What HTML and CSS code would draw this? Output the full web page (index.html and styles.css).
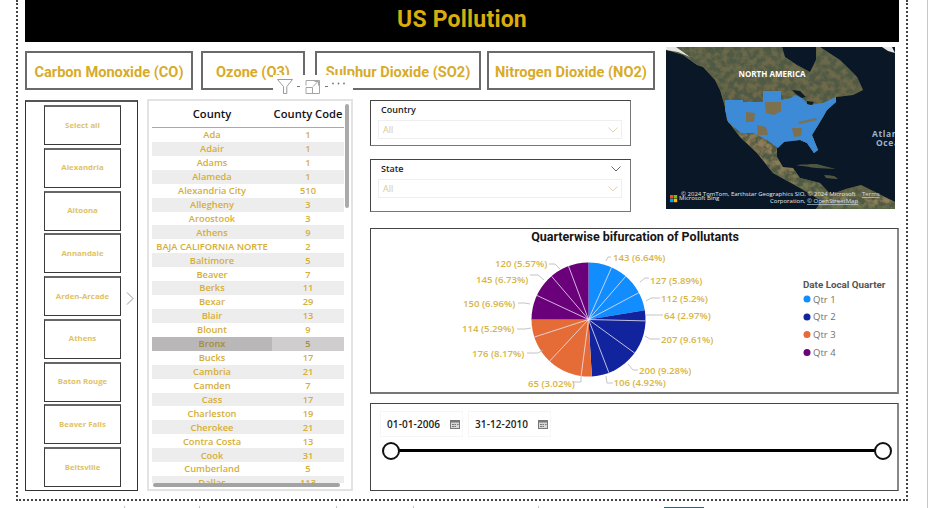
FILE: index.html
```html
<!DOCTYPE html>
<html lang="en">
<head>
<meta charset="utf-8">
<title>US Pollution</title>
<link rel="stylesheet" href="styles.css">
</head>
<body>
<div class="shell">
  <div class="frame">
    <header class="banner"><h1>US Pollution</h1></header>
    <div class="board">
      <div class="kpis">
        <div class="kpi kpi-co">Carbon Monoxide (CO)</div>
        <div class="kpi kpi-o3">Ozone (O3)</div>
        <div class="kpi kpi-so2">Sulphur Dioxide (SO2)</div>
        <div class="kpi kpi-no2">Nitrogen Dioxide (NO2)</div>
      </div>

      <div class="map">
        <svg class="map-svg" viewBox="0 0 229 162" width="229" height="162" role="img" aria-label="Map of North America">
          <defs>
            <linearGradient id="land" x1="0" y1="0" x2="0" y2="1">
              <stop offset="0" stop-color="#6a6a4c"/>
              <stop offset="0.35" stop-color="#6f6a48"/>
              <stop offset="0.65" stop-color="#94825a"/>
              <stop offset="1" stop-color="#5f6e48"/>
            </linearGradient>
            <filter id="tex" x="0" y="0" width="100%" height="100%">
              <feTurbulence type="fractalNoise" baseFrequency="0.16" numOctaves="4" seed="7" result="n"/>
              <feColorMatrix in="n" type="matrix" values="0 0 0 0 .08  0 0 0 0 .1  0 0 0 0 .06  3.200 0 0 0 -1.050" result="shade"/>
              <feComposite in="shade" in2="SourceAlpha" operator="in" result="clip"/>
              <feMerge result="m"><feMergeNode in="SourceGraphic"/><feMergeNode in="clip"/></feMerge>
              <feGaussianBlur in="m" stdDeviation="0.4"/>
            </filter>
            <filter id="soft"><feGaussianBlur stdDeviation="0.4"/></filter>
          </defs>
          <rect width="229" height="162" fill="#0a1726"/>
          <g filter="url(#tex)">
            <path fill="url(#land)" d="M0 0L.7 3L17 8L31 18L37 20L49 33L54 43L59 60L61 73L74 90L91 106L107 126L134 141L154 153L170 162H180L174 156L167 150L154 136L134 131L127 121L117 120L111 110L111 101L119 94L134 93L141 96L148 106L152 103L146 88L157 70L161 63L170 55L170 50L187 48L197 43L191 30L174 13L154 0H150L150 13L144 25L131 18L119 10L116 0Z"/>
            <path fill="url(#land)" d="M150 162L158 150L180 142L195 138L215 148L229 155V162Z"/>
            <path fill="#4d5640" d="M130 118L150 117L170 122L150 121ZM158 128L168 129L172 132L160 131Z"/>
          </g>
          <g filter="url(#soft)">
            <path fill="#e6e6e2" d="M0 0H10L24 10L12 5L0 3ZM216 0H226L229 6L222 4Z"/>
            <path fill="#3d8bd6" d="M59 53H77V55H97V44H115V53L125 51L129 48L136 51L143 58L157 56L170 50L170 55L161 63L157 70L146 88L152 103L148 106L141 96L134 93L118 95L112 101L101 93L95 90L88 86L75 86L62 75L59 63Z"/>
            <path fill="#7b6f50" d="M99 55H115V64L108 68L100 66ZM80 65L89 66L88 75L80 75ZM91 78L100 80L102 88L92 88ZM126 81H136L135 89L128 90ZM132 75L150 71L151 73L134 77Z"/>
            <path fill="#0c1a26" d="M126 43L134 44L140 50L136 51L130 47ZM141 54L148 55L146 58L141 57Z"/>
          </g>
          <text class="map-region" x="106" y="30" text-anchor="middle">NORTH AMERICA</text>
          <text class="map-ocean" x="206" y="90">Atlan</text>
          <text class="map-ocean" x="210" y="99">Ocea</text>
          <g class="ms-logo">
            <rect x="4" y="148" width="3.400" height="3.400" fill="#f25022"/>
            <rect x="7.800" y="148" width="3.400" height="3.400" fill="#7fba00"/>
            <rect x="4" y="151.800" width="3.400" height="3.400" fill="#00a4ef"/>
            <rect x="7.800" y="151.800" width="3.400" height="3.400" fill="#ffb900"/>
          </g>
          <text class="map-fine" x="13" y="153">Microsoft Bing</text>
          <text class="map-fine" x="15" y="149">© 2024 TomTom, Earthstar Geographics SIO, © 2024 Microsoft</text>
          <text class="map-fine map-link" x="196" y="149">Terms</text>
          <text class="map-fine" x="104" y="156">Corporation, <tspan class="map-link">© OpenStreetMap</tspan></text>
        </svg>
      </div>

      <aside class="slicer">
        <button class="tile">Select all</button>
        <button class="tile">Alexandria</button>
        <button class="tile">Altoona</button>
        <button class="tile">Annandale</button>
        <button class="tile">Arden-Arcade</button>
        <button class="tile">Athens</button>
        <button class="tile">Baton Rouge</button>
        <button class="tile">Beaver Falls</button>
        <button class="tile">Beltsville</button>
        <svg class="next" viewBox="0 0 8 13" width="8" height="13"><path d="M1 .5L7 6.500L1 12.500" fill="none" stroke="#8a8a8a" stroke-width=".9"/></svg>
      </aside>

      <section class="table-card">
        <div class="thead"><span>County</span><span>County Code</span></div>
        <div class="tbody">
          <div class="row"><span>Ada</span><span>1</span></div>
          <div class="row"><span>Adair</span><span>1</span></div>
          <div class="row"><span>Adams</span><span>1</span></div>
          <div class="row"><span>Alameda</span><span>1</span></div>
          <div class="row"><span>Alexandria City</span><span>510</span></div>
          <div class="row"><span>Allegheny</span><span>3</span></div>
          <div class="row"><span>Aroostook</span><span>3</span></div>
          <div class="row"><span>Athens</span><span>9</span></div>
          <div class="row"><span>BAJA CALIFORNIA NORTE</span><span>2</span></div>
          <div class="row"><span>Baltimore</span><span>5</span></div>
          <div class="row"><span>Beaver</span><span>7</span></div>
          <div class="row"><span>Berks</span><span>11</span></div>
          <div class="row"><span>Bexar</span><span>29</span></div>
          <div class="row"><span>Blair</span><span>13</span></div>
          <div class="row"><span>Blount</span><span>9</span></div>
          <div class="row row-hit"><span>Bronx</span><span>5</span></div>
          <div class="row"><span>Bucks</span><span>17</span></div>
          <div class="row"><span>Cambria</span><span>21</span></div>
          <div class="row"><span>Camden</span><span>7</span></div>
          <div class="row"><span>Cass</span><span>17</span></div>
          <div class="row"><span>Charleston</span><span>19</span></div>
          <div class="row"><span>Cherokee</span><span>21</span></div>
          <div class="row"><span>Contra Costa</span><span>13</span></div>
          <div class="row"><span>Cook</span><span>31</span></div>
          <div class="row"><span>Cumberland</span><span>5</span></div>
          <div class="row"><span>Dallas</span><span>113</span></div>
        </div>
        <div class="vbar"></div>
        <div class="hbar"></div>
      </section>

      <div class="toolbar">
        <svg viewBox="0 0 80 18" width="80" height="18">
          <path d="M4.500 2.500H19.500L13.800 9.500V16.500H10.500V9.500Z" fill="none" stroke="#9a9a9a" stroke-width="1"/>
          <path d="M24 9.500H27M52 9.500H55" stroke="#777" stroke-width="1"/>
          <path d="M33 8.500V3.500H46.500V16.500H33V10.500H39.500V16.500M40 9.500L45 4.500M41.500 4.500H45.500V8.500" fill="none" stroke="#a5a5a5" stroke-width="1"/>
          <circle cx="60" cy="6.500" r=".9" fill="#777"/>
          <circle cx="65.500" cy="6.500" r=".9" fill="#777"/>
          <circle cx="71" cy="6.500" r=".9" fill="#777"/>
        </svg>
      </div>

      <div class="filter filter-country">
        <div class="filter-head"><span>Country</span></div>
        <div class="filter-box"><span>All</span>
          <svg viewBox="0 0 10 6" width="10" height="6"><path d="M.5 .5L5 5L9.500 .5" fill="none" stroke="#e0d6b4" stroke-width="1"/></svg>
        </div>
      </div>

      <div class="filter filter-state">
        <div class="filter-head"><span>State</span>
          <svg viewBox="0 0 10 6" width="10" height="6"><path d="M.5 .5L5 5L9.500 .5" fill="none" stroke="#555" stroke-width=".9"/></svg>
        </div>
        <div class="filter-box"><span>All</span>
          <svg viewBox="0 0 10 6" width="10" height="6"><path d="M.5 .5L5 5L9.500 .5" fill="none" stroke="#e0d6b4" stroke-width="1"/></svg>
        </div>
      </div>

      <section class="chart">
        <svg viewBox="1 1 526 163" width="526" height="163" role="img" aria-label="Quarterwise bifurcation of Pollutants">
          <text class="chart-title" x="265" y="13" text-anchor="middle">Quarterwise bifurcation of Pollutants</text>
          <g transform="translate(218.500 91.500)">
            <path fill="#118dff" d="M0 0V-57A57 57 0 0 1 56.300 -9.200Z"/>
            <path fill="#12239e" d="M0 0L56.300 -9.200A57 57 0 0 1 3.400 56.900Z"/>
            <path fill="#e66c37" d="M0 0L3.400 56.900A57 57 0 0 1 -57 0Z"/>
            <path fill="#6b007b" d="M0 0H-57A57 57 0 0 1 0 -57Z"/>
            <g class="spokes">
              <path d="M0 0L23.100 -52.100M0 0L37.200 -43.200M0 0L50.300 -26.800M0 0L57 1.400M0 0L46.100 33.500M0 0L20.400 53.200M0 0L-7.400 56.500M0 0L-38.900 41.700M0 0L-54.200 17.600M0 0L-51.700 -24.100M0 0L-37 -43.300M0 0L-20 -53.400"/>
            </g>
          </g>
          <g class="leaders">
            <path d="M236 33L238 29H241"/>
            <path d="M270 54L275 50H279"/>
            <path d="M276 73L281 70H290"/>
            <path d="M276 87H293"/>
            <path d="M275 108L280 111H290"/>
            <path d="M258 136L263 142H268"/>
            <path d="M236 148L237 155H243"/>
            <path d="M211 148V154H203"/>
            <path d="M173 122L168 125H157"/>
            <path d="M161 100L155 101H147"/>
            <path d="M160 76L155 75H148"/>
            <path d="M174 52L168 47H160"/>
            <path d="M190 41L185 36H179"/>
          </g>
          <g class="slice-labels">
            <text x="243" y="32.500">143 (6.64%)</text>
            <text x="280" y="55.500">127 (5.89%)</text>
            <text x="291" y="73.500">112 (5.2%)</text>
            <text x="294" y="90.500">64 (2.97%)</text>
            <text x="291" y="115">207 (9.61%)</text>
            <text x="269" y="145.500">200 (9.28%)</text>
            <text x="243.500" y="158">106 (4.92%)</text>
            <text x="158" y="158.500">65 (3.02%)</text>
            <text x="102" y="128.500">176 (8.17%)</text>
            <text x="92" y="104">114 (5.29%)</text>
            <text x="93" y="79">150 (6.96%)</text>
            <text x="106" y="55">145 (6.73%)</text>
            <text x="125" y="39">120 (5.57%)</text>
          </g>
          <text class="legend-title" x="433" y="60">Date Local Quarter</text>
          <circle cx="437" cy="71" r="3.500" fill="#118dff"/>
          <text class="legend-item" x="443" y="74.500">Qtr 1</text>
          <circle cx="437" cy="89" r="3.500" fill="#12239e"/>
          <text class="legend-item" x="443" y="92">Qtr 2</text>
          <circle cx="437" cy="106.500" r="3.500" fill="#e66c37"/>
          <text class="legend-item" x="443" y="110">Qtr 3</text>
          <circle cx="437" cy="124.500" r="3.500" fill="#6b007b"/>
          <text class="legend-item" x="443" y="128">Qtr 4</text>
        </svg>
      </section>

      <section class="dates">
        <div class="date-row">
          <div class="date-box"><span>01-01-2006</span>
            <svg viewBox="0 0 10 9" width="10" height="9"><path d="M0 0H10V9H0Z" fill="#777"/><path d="M1 2.500H9V8H1Z" fill="#d8d8d8"/><path d="M2 4H4V5H2ZM4.500 4H6V5H4.500ZM7 4H8.500V5H7ZM2 6H4V7H2ZM4.500 6H6V7H4.500Z" fill="#777"/></svg>
          </div>
          <div class="date-box"><span>31-12-2010</span>
            <svg viewBox="0 0 10 9" width="10" height="9"><path d="M0 0H10V9H0Z" fill="#777"/><path d="M1 2.500H9V8H1Z" fill="#d8d8d8"/><path d="M2 4H4V5H2ZM4.500 4H6V5H4.500ZM7 4H8.500V5H7ZM2 6H4V7H2ZM4.500 6H6V7H4.500Z" fill="#777"/></svg>
          </div>
        </div>
        <div class="range"><i class="thumb"></i><i class="thumb"></i></div>
      </section>
    </div>
  </div>
  <div class="tabs"><i></i><i></i><i></i><i></i><i></i><b></b></div>
</div>
</body>
</html>
```

FILE: styles.css
```css
* { box-sizing: border-box; }
html, body { margin: 0; padding: 0; background: #fff; overflow: hidden; }
body { width: 931px; height: 508px; font-family: "Open Sans", "Liberation Sans", sans-serif; }

.shell { width: 928px; height: 508px; border-right: 1px solid #c9c9c9; }

.frame {
  margin-left: 16px;
  width: 892px;
  height: 501px;
  padding: 0 8px 0 7px;
  border-left: 2px dotted #444;
  border-right: 2px dotted #444;
  border-bottom: 2px dotted #444;
}

.banner {
  height: 42px;
  width: 874px;
  background: #000;
  display: flex;
  align-items: center;
  justify-content: center;
  padding-bottom: 4px;
}
.banner h1 {
  margin: 0;
  font: 700 23px/1 "Roboto", sans-serif;
  color: #d9ad0c;
  letter-spacing: .2px;
}

.board {
  position: relative;
  margin-top: 5px;
  display: grid;
  grid-template-columns: 113px 215px 278px 264px 4px;
  grid-template-rows: 4px 39px 10px 46px 13px 53px 16px 166px 9px 88px;
  width: 874px;
}
.board > .slicer { grid-column: 1; grid-row: 4 / 11; }
.board > .table-card { grid-column: 2; grid-row: 4 / 11; margin-left: 9px; width: 206px; margin-top: -1px; }

/* KPI cards */
.kpis {
  grid-column: 1 / 4;
  grid-row: 2;
  display: flex;
  width: 630px;
}
.kpi {
  border: 2px solid #6a6a6a;
  display: flex;
  align-items: center;
  justify-content: center;
  padding-top: 4px;
  font: 700 14.600px/1 "Roboto", sans-serif;
  color: #d8ab2a;
  background: #fff;
  white-space: nowrap;
}
.kpi-co { width: 168px; }
.kpi-o3 { width: 104px; margin-left: 8px; }
.kpi-so2 { width: 166px; margin-left: 10px; }
.kpi-no2 { width: 168px; margin-left: 6px; }

/* Map */
.map { grid-column: 4; grid-row: 1 / 7; margin-left: 35px; width: 229px; height: 162px; }
.map-svg { display: block; }
.map-region { font: 700 8px "Open Sans", sans-serif; fill: #fff; }
.map-ocean { font: 700 8.500px "Open Sans", sans-serif; fill: #9db2c6; letter-spacing: .6px; }
.map-fine { font: 400 6px "Open Sans", sans-serif; fill: #e8e8e8; }
.map-link { fill: #cfe0f5; text-decoration: underline; }

/* Left slicer */
.slicer {
  position: relative;
  width: 113px;
  border: 1px solid #333;
  border-top: 2px solid #555;
  padding: 3px 16px 3px 18px;
  display: flex;
  flex-direction: column;
  gap: 2.700px;
}
.tile {
  flex: 1 1 0;
  width: 77px;
  padding: 0;
  background: #fff;
  border: 1.500px solid #3a3a3a;
  border-top: 2px solid #666;
  font: 700 7.800px/1 "Open Sans", sans-serif;
  color: #dfc265;
}
.next { position: absolute; left: 100px; top: 190px; }

/* Table */
.table-card {
  position: relative;
  height: 392px;
  border: 2px solid #e3e3e3;
  padding: 3px 0 0 3px;
}
.thead {
  width: 192px;
  height: 24px;
  padding-bottom: 4px;
  display: grid;
  grid-template-columns: 120px 72px;
  align-items: center;
  text-align: center;
  font: 600 11.200px/1 "Open Sans", sans-serif;
  color: #111;
  border-bottom: 1px solid #7db6dc;
  white-space: nowrap;
}
.tbody { width: 192px; height: 355px; overflow: hidden; }
.row {
  display: grid;
  grid-template-columns: 120px 72px;
  height: 13.930px;
  align-items: center;
  text-align: center;
  font: 600 9.300px/1 "Open Sans", sans-serif;
  color: #d6ae35;
  white-space: nowrap;
}
.row:nth-child(even) { background: #eeedee; }
.row-hit, .row-hit:nth-child(even) { background: #d0cdce; color: #a88e2e; }
.row-hit span:first-child { background: #b9b7b8; align-self: stretch; line-height: 13.930px; }
.vbar { position: absolute; left: 196px; top: 3px; width: 4px; height: 104px; background: #ababab; border-radius: 2px; }
.hbar { position: absolute; left: 4px; bottom: 2px; width: 187px; height: 4px; background: #a3a3a3; border-radius: 2px; }

/* Floating visual header */
.toolbar {
  position: absolute;
  left: 248px;
  top: 28px;
  width: 80px;
  height: 23px;
  background: #fff;
  padding-top: 2px;
  line-height: 0;
}

/* Dropdown slicers */
.filter {
  grid-column: 3;
  margin-left: 17px;
  width: 261px;
  border: 1.500px solid #444;
  border-right-color: #777;
  border-bottom-color: #777;
  padding: 1px 8px 0 7px;
}
.filter-country { grid-row: 4; }
.filter-state { grid-row: 6; }
.filter-head {
  height: 15px;
  padding: 0 0 0 3px;
  display: flex;
  justify-content: space-between;
  align-items: center;
  font: 600 9px/1 "Open Sans", sans-serif;
  color: #222;
}
.filter-state .filter-head svg { margin-right: 1px; }
.filter-box {
  margin-top: 3px;
  height: 19px;
  border: 1px solid #efefef;
  padding: 0 3px 0 4px;
  display: flex;
  justify-content: space-between;
  align-items: center;
  font: 400 9px/1 "Open Sans", sans-serif;
  color: #d9c98c;
}

/* Pie chart */
.chart {
  grid-column: 3 / 6;
  grid-row: 8;
  margin-left: 17px;
  width: 529px;
  border: 1px solid #444;
  border-right: 2px solid #888;
  border-bottom: 2px solid #777;
  line-height: 0;
}
.chart-title { font: 700 12.500px "Roboto", sans-serif; fill: #151515; }
.spokes path { stroke: #ece4f2; stroke-width: .8; fill: none; }
.leaders path { stroke: #b5b5b5; stroke-width: .8; fill: none; }
.slice-labels text { font: 600 9.600px "Open Sans", sans-serif; fill: #d8b445; }
.legend-title { font: 700 9.800px "Roboto", sans-serif; fill: #555; }
.legend-item { font: 400 9.500px "Open Sans", sans-serif; fill: #707070; }

/* Date range */
.dates {
  grid-column: 3 / 6;
  grid-row: 10;
  margin-left: 17px;
  width: 529px;
  border: 1px solid #444;
  border-right: 2px solid #888;
  padding: 7px 8px 0 9px;
}
.date-row { display: flex; gap: 5px; }
.date-box {
  width: 83px;
  height: 26px;
  border: 1px solid #f6f6f6;
  padding: 0 2px 0 6px;
  display: flex;
  align-items: center;
  justify-content: space-between;
  font: 600 10px/1 "Open Sans", sans-serif;
  letter-spacing: .1px;
  color: #222;
}
.range {
  position: relative;
  height: 3px;
  margin: 12px 6px 0 11px;
  background: #000;
  display: flex;
  justify-content: space-between;
  align-items: center;
}
.thumb {
  width: 18px;
  height: 18px;
  margin: 0 -9px;
  border: 2px solid #111;
  border-radius: 50%;
  background: #fff;
  flex: none;
}

/* Report page strip */
.tabs {
  position: relative;
  height: 7px;
  display: flex;
  padding-top: 5px;
}
.tabs i { width: 0; height: 2px; border-left: 1px solid #c4c4c4; }
.tabs i:nth-child(1) { margin-left: 124px; }
.tabs i:nth-child(2) { margin-left: 74px; }
.tabs i:nth-child(3) { margin-left: 136px; }
.tabs i:nth-child(4) { margin-left: 76px; }
.tabs i:nth-child(5) { margin-left: 124px; }
.tabs b { width: 40px; height: 1px; margin: 1px 0 0 125px; background: #1c6e78; }
```
